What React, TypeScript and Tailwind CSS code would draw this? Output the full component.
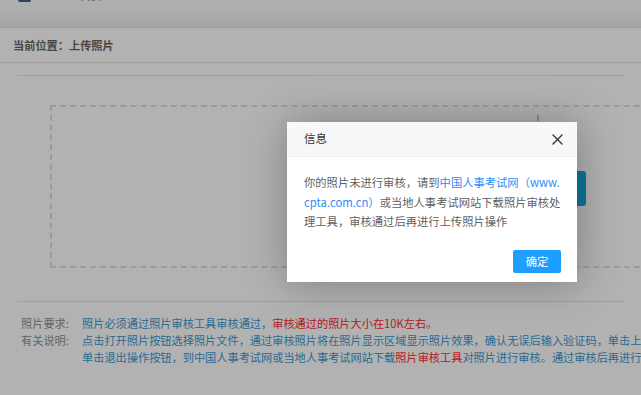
import React from "react";

function CloseIcon() {
  return (
    <svg width="11" height="11" viewBox="0 0 11 11" fill="none">
      <path d="M1 1L10 10M10 1L1 10" stroke="#333" strokeWidth="1.4" strokeLinecap="round" />
    </svg>
  );
}

export default function App() {
  return (
    <div className="relative h-[395px] w-[641px] overflow-hidden bg-white font-['Noto_Sans_CJK_SC',sans-serif]">
      {/* top bar, mostly scrolled out of view */}
      <div className="h-[14px] overflow-hidden bg-[#fafafa]">
        <div className="-mt-[12px] flex items-center pl-[18px]">
          <div className="h-[14px] w-[13px] rounded-[2px] bg-[#46607c]" />
          <span className="ml-[49px] text-[11px] leading-[14px] text-[#777]">首页</span>
        </div>
      </div>
      <div className="h-[13px] bg-gradient-to-b from-[#f6f6f6] to-[#ececec]" />

      <div className="border-t border-[#e4e4e4] bg-white">
        <div className="flex h-[35px] items-center border-b border-[#e6e6e6] pl-[13px] text-[11.2px] font-bold text-[#666]">
          当前位置：上传照片
        </div>

        <div className="px-[17px] pt-[12px]">
          <div className="border-t border-[#e6e6e6] pl-[33px] pt-[29px]">
            <div className="h-[163px] w-[640px] border-2 border-dashed border-[#dedede]">
              <div className="ml-[485px] mt-[8px] h-[6px] w-[2px] bg-[#c8c8c8]" />
              <button className="ml-[444px] mt-[50px] h-[35px] w-[90px] rounded-[3px] bg-[#12abd8] text-[12px] text-white">
                打开照片
              </button>
            </div>
          </div>

          <div className="mt-[33px] border-t border-[#e6e6e6] pt-[13px] text-[11.2px] leading-[17px]">
            <div className="flex">
              <span className="w-[65px] shrink-0 pl-[4px] text-[#8f8f8f]">照片要求:</span>
              <span className="whitespace-nowrap text-[#3d98d0]">
                照片必须通过照片审核工具审核通过，
                <span className="text-[#ff2b2b]">审核通过的照片大小在10K左右。</span>
              </span>
            </div>
            <div className="flex">
              <span className="w-[65px] shrink-0 pl-[4px] text-[#8f8f8f]">有关说明:</span>
              <div className="text-[#3d98d0]">
                <div className="whitespace-nowrap">
                  点击打开照片按钮选择照片文件，通过审核照片将在照片显示区域显示照片效果，确认无误后输入验证码，单击上传照片按钮完成上传；如需退出，
                </div>
                <div className="whitespace-nowrap">
                  单击退出操作按钮，到中国人事考试网或当地人事考试网站下载
                  <span className="text-[#ff2b2b]">照片审核工具</span>
                  对照片进行审核。通过审核后再进行上传。
                </div>
              </div>
            </div>
          </div>
        </div>
      </div>

      {/* dialog shade */}
      <div className="absolute inset-0 bg-black/30" />

      <div className="absolute left-[287px] top-[122px] flex h-[160px] w-[290px] flex-col bg-white shadow-[1px_1px_40px_rgba(0,0,0,0.3)]">
        <div className="flex h-[35px] items-center justify-between border-b border-[#eee] bg-[#f8f8f8] pl-[17px] pr-[14px]">
          <span className="text-[11.5px] text-[#333]">信息</span>
          <CloseIcon />
        </div>
        <div className="pl-[17px] pr-[12px] pt-[16px] text-[11.3px] leading-[19.5px] text-[#5f5f5f]">
          你的照片未进行审核，请到<span className="text-[#2f8cf5]">中国人事考试网（www.<wbr />cpta.com.cn）</span>或当地人事考试网站下载照片审核处理工具，审核通过后再进行上传照片操作
        </div>
        <div className="mt-[18px] flex justify-end pr-[16px]">
          <button className="h-[23px] w-[48px] rounded-[2px] bg-[#1e9fff] text-[11.3px] text-white">确定</button>
        </div>
      </div>
    </div>
  );
}
